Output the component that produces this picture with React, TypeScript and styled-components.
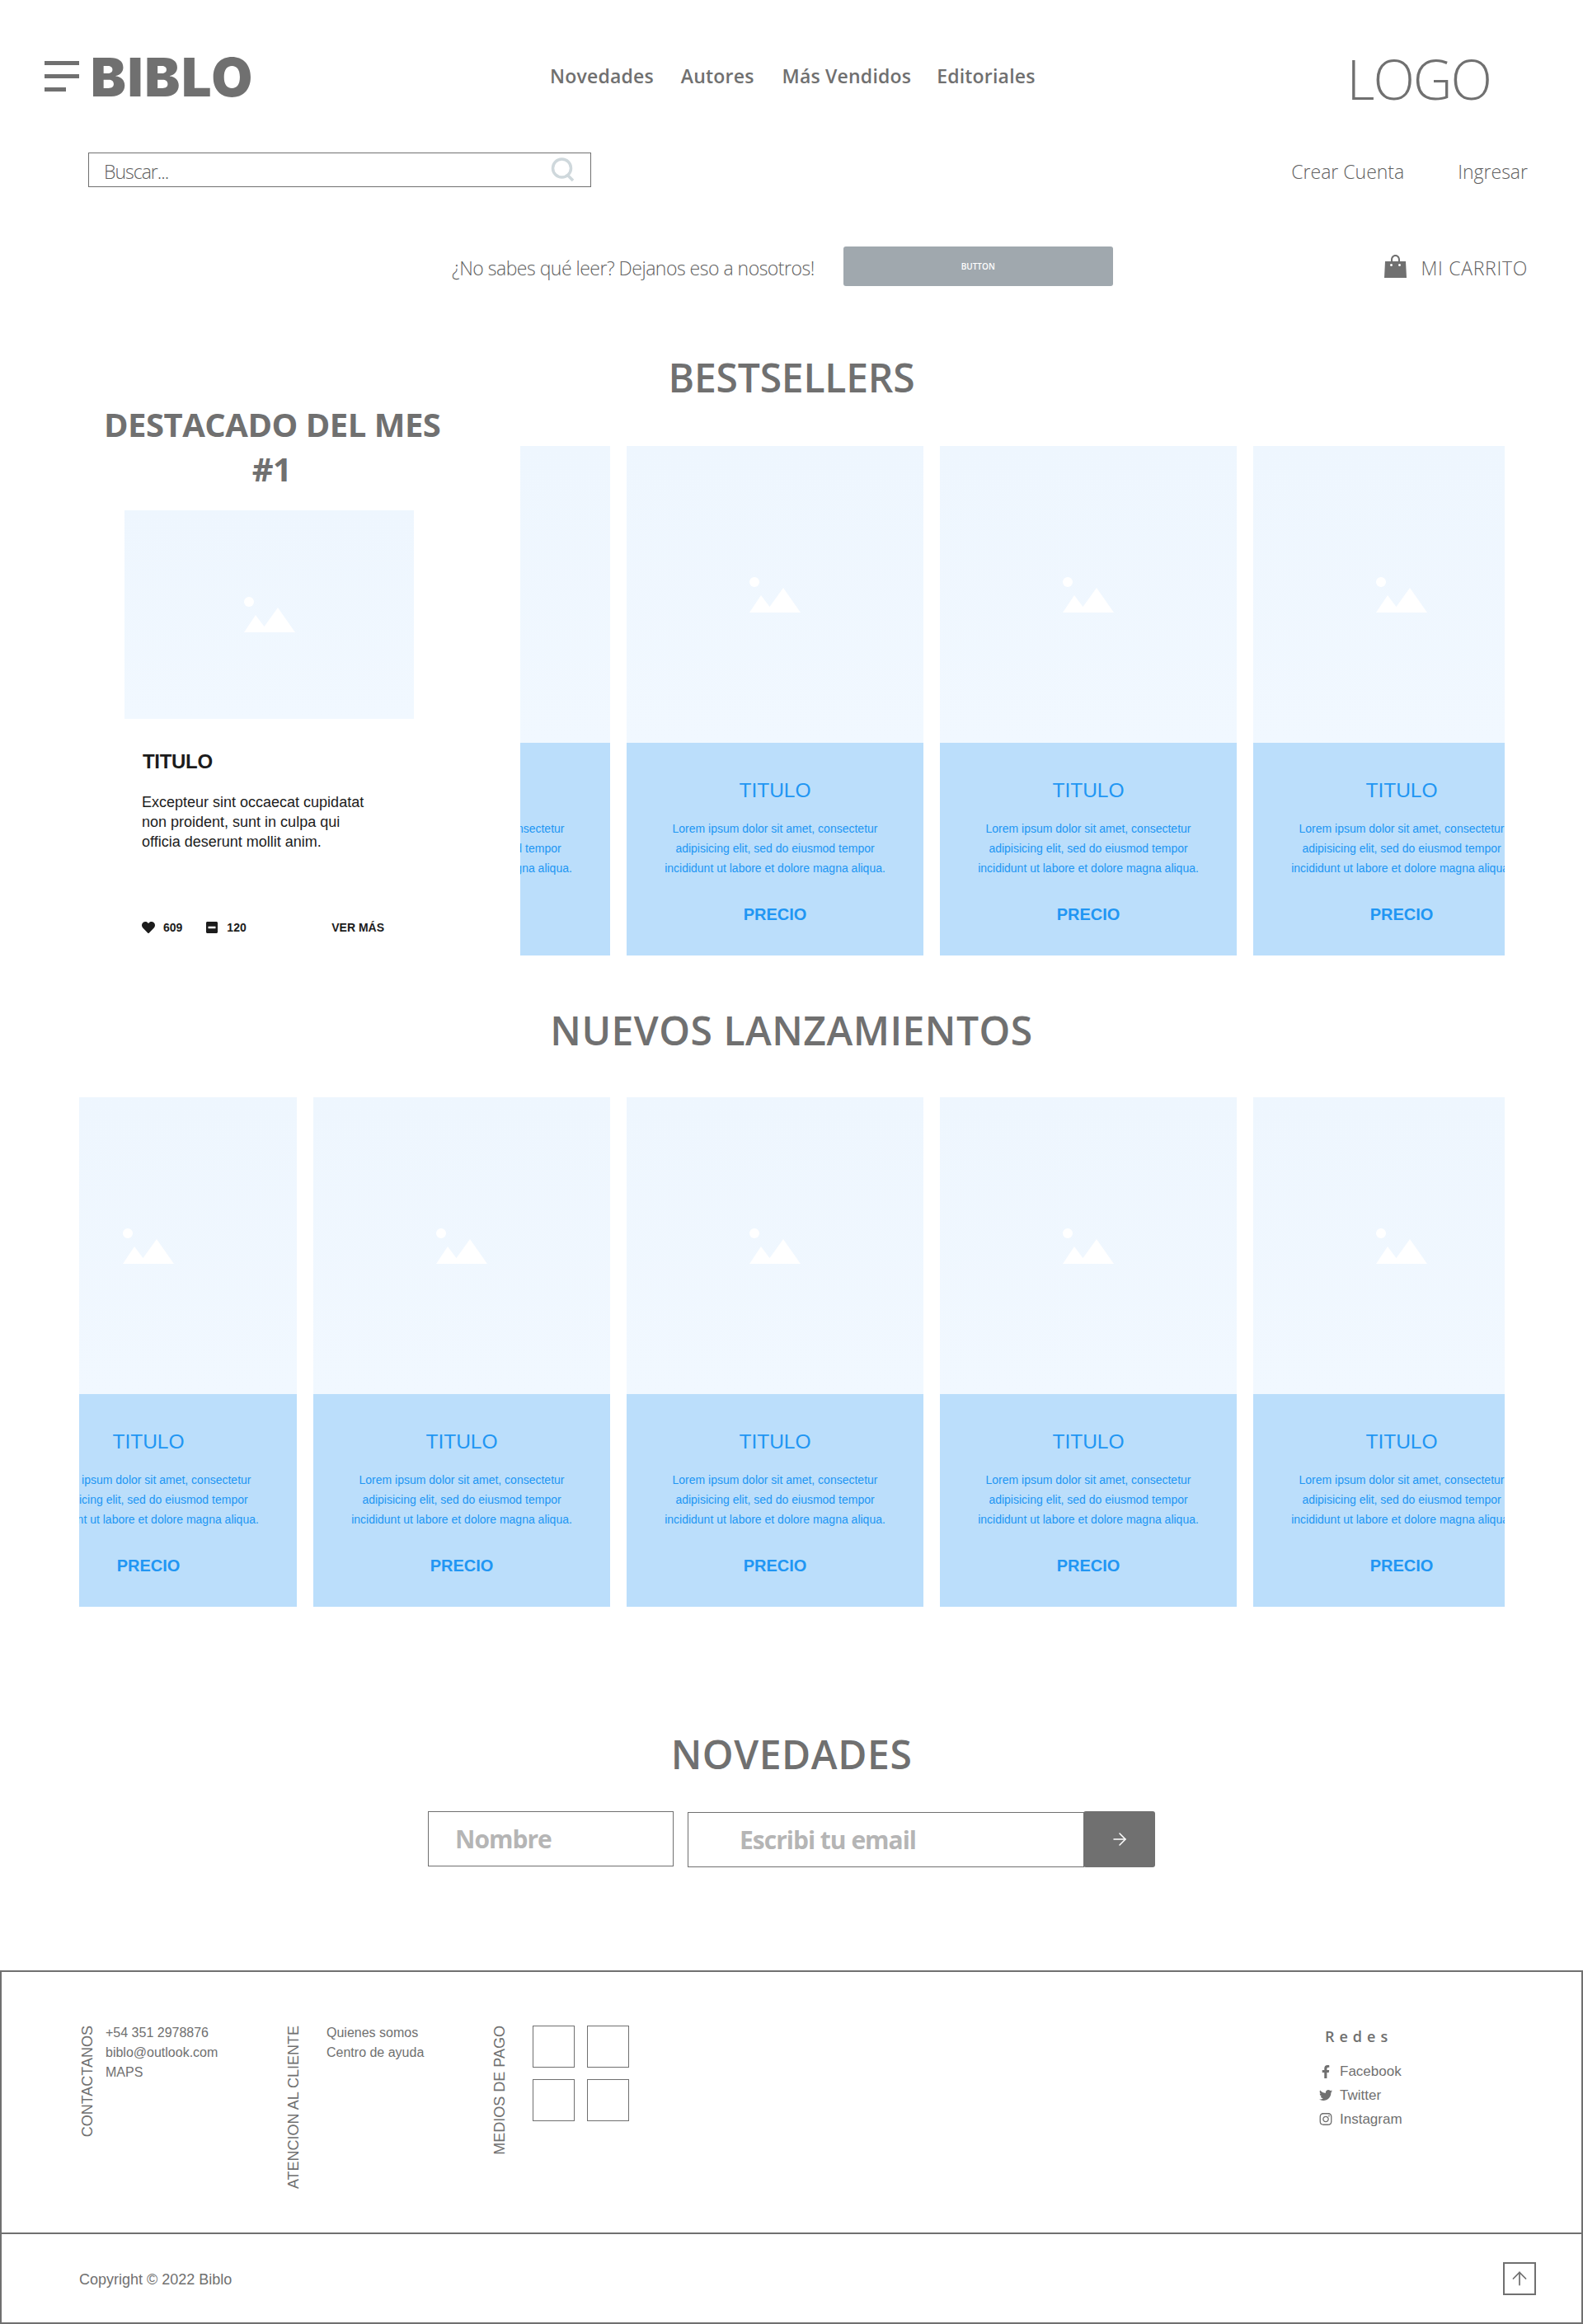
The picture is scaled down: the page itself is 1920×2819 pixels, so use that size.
import React from 'react';
import styled, { createGlobalStyle } from 'styled-components';
import { FaFacebookF, FaTwitter, FaInstagram, FaHeart, FaMinusSquare } from 'react-icons/fa';
import { ArrowRight, ArrowUp } from 'lucide-react';

const GRAY = '#707070';
const BLUE = '#2196f3';
const SEGOE = '"Open Sans", "Liberation Sans", sans-serif';
const ARIAL = '"Liberation Sans", Arial, sans-serif';

const GlobalStyle = createGlobalStyle`
    html, body {
        margin: 0;
        padding: 0;
        background: #fff;
    }
    * {
        box-sizing: border-box;
    }
`;

const Page = styled.div`
    width: 1920px;
    height: 2819px;
    overflow: hidden;
    color: ${GRAY};
    font-family: ${SEGOE};
`;

const TopBar = styled.header`
    display: flex;
    align-items: center;
    height: 185px;
    padding: 7px 0 0 54px;
`;

const Burger = styled.div`
    display: flex;
    flex-direction: column;
    gap: 11px;
    width: 42px;
    margin-top: -7px;
`;

const BurgerBar = styled.span<{ $short?: boolean }>`
    display: block;
    height: 5px;
    width: ${(p) => (p.$short ? '26px' : '42px')};
    background: ${GRAY};
`;

const Brand = styled.div`
    font-family: Inter, sans-serif;
    font-weight: 900;
    font-size: 64px;
    line-height: 64px;
    width: 196px;
    margin: -4px 0 0 14px;
    letter-spacing: 2px;
`;

const Nav = styled.nav`
    display: flex;
    margin: -8px 0 0 361px;
`;

const NavItem = styled.a<{ $gap: number }>`
    font-weight: 600;
    font-size: 23px;
    letter-spacing: 0.2px;
    margin-right: ${(p) => p.$gap}px;
`;

const Logo = styled.div`
    margin-left: auto;
    margin-right: 112px;
    margin-top: -2px;
    font-weight: 300;
    font-size: 66px;
    line-height: 72px;
    letter-spacing: -2px;
`;

const SearchRow = styled.div`
    display: flex;
    justify-content: space-between;
    align-items: center;
    height: 42px;
    padding: 0 67px 0 107px;
`;

const SearchBox = styled.div`
    display: flex;
    align-items: center;
    justify-content: space-between;
    width: 610px;
    height: 42px;
    padding: 0 18px 0 18px;
    border: 1px solid ${GRAY};
`;

const LightText = styled.span<{ $spacing: number }>`
    margin-top: 3px;
    font-weight: 300;
    font-size: 23px;
    color: #5f5f5f;
    letter-spacing: ${(p) => p.$spacing}px;
    white-space: nowrap;
`;

const AccountLinks = styled.div`
    display: flex;
    gap: 65px;
`;

const PromoRow = styled.div`
    display: flex;
    align-items: center;
    height: 48px;
    margin-top: 72px;
    padding: 0 67px 0 548px;
`;

const PromoButton = styled.button`
    width: 327px;
    height: 48px;
    margin-left: 35px;
    border: none;
    border-radius: 3px;
    background: #a0a8ae;
    color: #fff;
    font-family: ${SEGOE};
    font-size: 10px;
    font-weight: 600;
`;

const Cart = styled.div`
    display: flex;
    align-items: center;
    gap: 18px;
    margin-left: auto;
`;

const SectionTitle = styled.h2<{ $top: number; $spacing: number }>`
    margin: ${(p) => p.$top}px 0 0;
    text-align: center;
    font-weight: 600;
    font-size: 48px;
    line-height: 64px;
    letter-spacing: ${(p) => p.$spacing}px;
`;

const BestRow = styled.section`
    display: flex;
    align-items: flex-start;
    margin-top: -2px;
    padding-left: 128px;
`;

const Feature = styled.article`
    flex: none;
    width: 407px;
`;

const FeatureHeading = styled.h3`
    margin: 0 2px 0 -2px;
    text-align: center;
    font-weight: 700;
    font-size: 40px;
    line-height: 54px;
    letter-spacing: -0.5px;
    white-space: nowrap;
`;

const Placeholder = styled.div<{ $height: number }>`
    display: flex;
    align-items: center;
    justify-content: center;
    height: ${(p) => p.$height}px;
    background: linear-gradient(#eef6fe, #f1f8ff);
`;

const FeatureImage = styled(Placeholder)`
    width: 351px;
    margin: 23px 0 0 23px;
`;

const FeatureBody = styled.div`
    margin-left: 44px;
    font-family: ${ARIAL};
    color: #1c1c1c;
`;

const FeatureTitle = styled.h4`
    margin: 38px 0 0 1px;
    font-size: 24px;
    line-height: 28px;
    font-weight: 700;
    letter-spacing: -0.3px;
`;

const FeatureText = styled.p`
    margin: 23px 0 0;
    font-size: 18px;
    line-height: 24px;
`;

const Stats = styled.div`
    display: flex;
    align-items: center;
    width: 294px;
    height: 16px;
    margin-top: 84px;
    font-size: 14px;
    font-weight: 700;
`;

const Stat = styled.span`
    display: flex;
    align-items: center;
    gap: 10px;
    margin-right: 28px;
`;

const SeeMore = styled.a`
    margin-left: auto;
`;

const Carousel = styled.div<{ $left: number; $width: number; $top: number }>`
    flex: none;
    width: ${(p) => p.$width}px;
    margin-left: ${(p) => p.$left}px;
    margin-top: ${(p) => p.$top}px;
    overflow: hidden;
`;

const Track = styled.div<{ $scroll: number }>`
    display: flex;
    gap: 20px;
    width: max-content;
    margin-left: ${(p) => -p.$scroll}px;
`;

const Card = styled.article`
    flex: none;
    width: 360px;
    font-family: ${ARIAL};
    color: ${BLUE};
    text-align: center;
`;

const CardBody = styled.div`
    height: 258px;
    padding-top: 42px;
    background: #bbdefb;
`;

const CardTitle = styled.h4`
    margin: 0;
    font-size: 24.5px;
    line-height: 32px;
    font-weight: 400;
`;

const CardText = styled.p`
    margin: 18px 0 0;
    font-size: 14px;
    line-height: 24px;
`;

const CardPrice = styled.div`
    margin-top: 32px;
    font-size: 20px;
    line-height: 24px;
    font-weight: 700;
`;

const NewsForm = styled.form`
    display: flex;
    gap: 17px;
    margin-top: 37px;
    padding-left: 519px;
`;

const EmailGroup = styled.div`
    display: flex;
`;

const Field = styled.div<{ $width: number; $pad: number; $nudge?: number }>`
    display: flex;
    align-items: center;
    width: ${(p) => p.$width}px;
    height: 67px;
    margin-top: ${(p) => p.$nudge ?? 0}px;
    padding-left: ${(p) => p.$pad}px;
    border: 1px solid ${GRAY};
    color: #b5b5b5;
    font-weight: 700;
    font-size: 30px;
    letter-spacing: -1px;
`;

const SendButton = styled.button`
    display: flex;
    align-items: center;
    justify-content: center;
    width: 87px;
    height: 68px;
    margin-left: -1px;
    padding: 0;
    border: none;
    border-radius: 3px;
    background: ${GRAY};
    color: #fff;
`;

const FooterMain = styled.footer`
    display: flex;
    align-items: flex-start;
    height: 318px;
    margin-top: 125px;
    padding: 65px 86px 0 95px;
    border: 2px solid ${GRAY};
    border-bottom: none;
    font-family: ${ARIAL};
    font-size: 16px;
`;

const FooterColumn = styled.div<{ $gap: number }>`
    display: flex;
    align-items: flex-start;
    gap: ${(p) => p.$gap}px;
    width: 250px;
`;

const VerticalLabel = styled.h5`
    margin: 0;
    writing-mode: vertical-rl;
    transform: rotate(180deg);
    font-size: 18px;
    line-height: 18px;
    font-weight: 400;
    white-space: nowrap;
`;

const FooterList = styled.ul`
    margin: -3px 0 0;
    padding: 0;
    list-style: none;
    line-height: 24px;
`;

const PayGrid = styled.div`
    display: grid;
    grid-template-columns: 51px 51px;
    grid-auto-rows: 51px;
    gap: 14px 15px;
`;

const PayBox = styled.div`
    border: 1px solid ${GRAY};
`;

const Social = styled.div`
    width: 232px;
    margin-left: auto;
`;

const SocialTitle = styled.h5`
    margin: 1px 0 0 7px;
    font-family: ${SEGOE};
    font-size: 18px;
    line-height: 24px;
    font-weight: 600;
    letter-spacing: 6px;
`;

const SocialList = styled.ul`
    margin: 16px 0 0;
    padding: 0;
    list-style: none;
    font-size: 17px;
`;

const SocialItem = styled.li`
    display: flex;
    align-items: center;
    height: 29px;
    gap: 9px;
`;

const SocialIcon = styled.span`
    display: flex;
    justify-content: center;
    width: 16px;
`;

const FooterBottom = styled.div`
    display: flex;
    align-items: center;
    justify-content: space-between;
    height: 111px;
    padding: 0 55px 0 94px;
    border: 2px solid ${GRAY};
    font-family: ${ARIAL};
    font-size: 18px;
`;

const Copyright = styled.span`
    margin-top: 3px;
`;

const UpButton = styled.button`
    display: flex;
    align-items: center;
    justify-content: center;
    width: 40px;
    height: 40px;
    padding: 0;
    border: 2px solid ${GRAY};
    background: none;
    color: ${GRAY};
`;

const PictureIcon = () => (
    <svg width="62" height="43" viewBox="0 0 62 43" fill="#fff">
        <circle cx="6" cy="6" r="6" />
        <path d="M0 43 L14 22 L24.5 36 L41 13 L62 43 Z" />
    </svg>
);

const SearchIcon = () => (
    <svg width="30" height="30" viewBox="0 0 30 30" fill="none" stroke="#cfd8dc" strokeWidth="3.5">
        <circle cx="13.5" cy="13" r="11" />
        <path d="M20 21 L27 28" />
    </svg>
);

const BagIcon = () => (
    <svg width="27" height="28" viewBox="0 0 27 28" fill={GRAY}>
        <path fillRule="evenodd" d="M1 8 H8 V6 C8 2.6 10.3 0 13.5 0 C16.7 0 19 2.6 19 6 V8 H26 L27 28 H0 Z M10 8 H17 V6 C17 3.8 15.6 2 13.5 2 C11.4 2 10 3.8 10 6 Z M8.5 11 a1.5 1.5 0 1 0 0.01 0 Z M18.5 11 a1.5 1.5 0 1 0 0.01 0 Z" />
    </svg>
);

const Product = () => (
    <Card>
        <Placeholder $height={360}>
            <PictureIcon />
        </Placeholder>
        <CardBody>
            <CardTitle>TITULO</CardTitle>
            <CardText>
                Lorem ipsum dolor sit amet, consectetur
                <br />
                adipisicing elit, sed do eiusmod tempor
                <br />
                incididunt ut labore et dolore magna aliqua.
            </CardText>
            <CardPrice>PRECIO</CardPrice>
        </CardBody>
    </Card>
);

const navLinks = [
    { label: 'Novedades', gap: 33 },
    { label: 'Autores', gap: 34 },
    { label: 'Más Vendidos', gap: 31 },
    { label: 'Editoriales', gap: 0 },
];

const socials = [
    { label: 'Facebook', icon: <FaFacebookF size={16} /> },
    { label: 'Twitter', icon: <FaTwitter size={17} /> },
    { label: 'Instagram', icon: <FaInstagram size={17} /> },
];

const App = () => {
    return (
        <Page>
            <GlobalStyle />
            <TopBar>
                <Burger>
                    <BurgerBar />
                    <BurgerBar />
                    <BurgerBar $short />
                </Burger>
                <Brand>BIBLO</Brand>
                <Nav>
                    {navLinks.map((link) => (
                        <NavItem key={link.label} $gap={link.gap}>{link.label}</NavItem>
                    ))}
                </Nav>
                <Logo>LOGO</Logo>
            </TopBar>
            <SearchRow>
                <SearchBox>
                    <LightText $spacing={-1}>Buscar...</LightText>
                    <SearchIcon />
                </SearchBox>
                <AccountLinks>
                    <LightText $spacing={0}>Crear Cuenta</LightText>
                    <LightText $spacing={0}>Ingresar</LightText>
                </AccountLinks>
            </SearchRow>
            <PromoRow>
                <LightText $spacing={-0.5}>¿No sabes qué leer? Dejanos eso a nosotros!</LightText>
                <PromoButton>BUTTON</PromoButton>
                <Cart>
                    <BagIcon />
                    <LightText $spacing={0.7}>MI CARRITO</LightText>
                </Cart>
            </PromoRow>

            <SectionTitle $top={79} $spacing={-0.2}>BESTSELLERS</SectionTitle>
            <BestRow>
                <Feature>
                    <FeatureHeading>DESTACADO DEL MES<br />#1</FeatureHeading>
                    <FeatureImage $height={253}>
                        <PictureIcon />
                    </FeatureImage>
                    <FeatureBody>
                        <FeatureTitle>TITULO</FeatureTitle>
                        <FeatureText>
                            Excepteur sint occaecat cupidatat
                            <br />
                            non proident, sunt in culpa qui
                            <br />
                            officia deserunt mollit anim.
                        </FeatureText>
                        <Stats>
                            <Stat><FaHeart size={16} /> 609</Stat>
                            <Stat><FaMinusSquare size={16} /> 120</Stat>
                            <SeeMore>VER MÁS</SeeMore>
                        </Stats>
                    </FeatureBody>
                </Feature>
                <Carousel $left={96} $width={1194} $top={53}>
                    <Track $scroll={251}>
                        {[0, 1, 2, 3].map((i) => <Product key={i} />)}
                    </Track>
                </Carousel>
            </BestRow>

            <SectionTitle $top={59} $spacing={0.5}>NUEVOS LANZAMIENTOS</SectionTitle>
            <Carousel $left={96} $width={1729} $top={49}>
                <Track $scroll={96}>
                    {[0, 1, 2, 3, 4].map((i) => <Product key={i} />)}
                </Track>
            </Carousel>

            <SectionTitle $top={147} $spacing={0.6}>NOVEDADES</SectionTitle>
            <NewsForm>
                <Field $width={298} $pad={32}>Nombre</Field>
                <EmailGroup>
                    <Field $width={481} $pad={62} $nudge={1}>Escribi tu email</Field>
                    <SendButton type="button"><ArrowRight size={24} strokeWidth={1.5} /></SendButton>
                </EmailGroup>
            </NewsForm>

            <FooterMain>
                <FooterColumn $gap={13}>
                    <VerticalLabel>CONTACTANOS</VerticalLabel>
                    <FooterList>
                        <li>+54 351 2978876</li>
                        <li>biblo@outlook.com</li>
                        <li>MAPS</li>
                    </FooterList>
                </FooterColumn>
                <FooterColumn $gap={31}>
                    <VerticalLabel>ATENCION AL CLIENTE</VerticalLabel>
                    <FooterList>
                        <li>Quienes somos</li>
                        <li>Centro de ayuda</li>
                    </FooterList>
                </FooterColumn>
                <FooterColumn $gap={31}>
                    <VerticalLabel>MEDIOS DE PAGO</VerticalLabel>
                    <PayGrid>
                        <PayBox />
                        <PayBox />
                        <PayBox />
                        <PayBox />
                    </PayGrid>
                </FooterColumn>
                <Social>
                    <SocialTitle>Redes</SocialTitle>
                    <SocialList>
                        {socials.map((s) => (
                            <SocialItem key={s.label}>
                                <SocialIcon>{s.icon}</SocialIcon>
                                {s.label}
                            </SocialItem>
                        ))}
                    </SocialList>
                </Social>
            </FooterMain>
            <FooterBottom>
                <Copyright>Copyright © 2022 Biblo</Copyright>
                <UpButton type="button"><ArrowUp size={26} strokeWidth={1.6} /></UpButton>
            </FooterBottom>
        </Page>
    );
};

export default App;
